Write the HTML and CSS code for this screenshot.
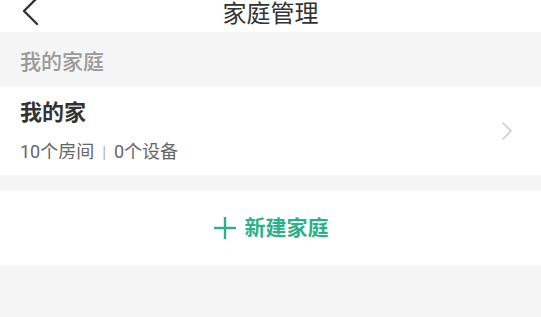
FILE: index.html
```html
<!DOCTYPE html>
<html lang="zh-CN">
<head>
<meta charset="utf-8">
<title>家庭管理</title>
<link rel="stylesheet" href="styles.css">
</head>
<body>
<header class="topbar">
  <div class="topbar-left">
    <svg class="back-icon" width="18" height="30" viewBox="0 0 18 30" aria-hidden="true">
      <polyline points="15,1 2,14 15,27" fill="none" stroke="#333" stroke-width="2.4" stroke-linecap="round" stroke-linejoin="round"/>
    </svg>
  </div>
  <h1 class="topbar-title">家庭管理</h1>
  <div class="topbar-right"></div>
</header>

<div class="section-label">我的家庭</div>

<div class="home-card">
  <div class="home-info">
    <div class="home-name">我的家</div>
    <div class="home-meta"><span>10个房间</span><span class="sep">|</span><span>0个设备</span></div>
  </div>
  <svg class="chevron" width="12" height="20" viewBox="0 0 12 20" aria-hidden="true">
    <polyline points="2,2 10,10 2,18" fill="none" stroke="#cfcfcf" stroke-width="1.6" stroke-linecap="round" stroke-linejoin="round"/>
  </svg>
</div>

<div class="add-row">
  <svg class="plus-icon" width="24" height="24" viewBox="0 0 24 24" aria-hidden="true">
    <line x1="1" y1="12" x2="23" y2="12" stroke="#2bb08a" stroke-width="2.4"/>
    <line x1="12" y1="1" x2="12" y2="23" stroke="#2bb08a" stroke-width="2.4"/>
  </svg>
  <span class="add-text">新建家庭</span>
</div>
</body>
</html>
```

FILE: styles.css
```css
html, body {
  margin: 0;
  padding: 0;
}

body {
  background: #f5f5f5;
  font-family: Roboto, "Noto Sans CJK SC", sans-serif;
  color: #333;
  width: 541px;
  height: 317px;
  overflow: hidden;
}

.topbar {
  height: 32px;
  background: #fff;
  display: grid;
  grid-template-columns: 1fr auto 1fr;
  align-items: start;
}

.topbar-left {
  padding-left: 22px;
  margin-top: -3px;
  height: 32px;
  overflow: hidden;
}

.back-icon {
  display: block;
}

.topbar-title {
  margin: 0;
  font-size: 24px;
  font-weight: 400;
  line-height: 28px;
  color: #333;
}

.section-label {
  height: 55px;
  display: flex;
  align-items: center;
  padding-left: 20px;
  font-size: 21px;
  font-weight: 500;
  color: #999;
}

.home-card {
  background: #fff;
  height: 88px;
  display: flex;
  align-items: center;
  justify-content: space-between;
  padding: 0 28px 0 20px;
}

.home-info {
  display: flex;
  flex-direction: column;
  gap: 13px;
}

.home-name {
  font-size: 22px;
  font-weight: 700;
  line-height: 28px;
  color: #333;
}

.home-meta {
  font-size: 18px;
  line-height: 24px;
  color: #666;
  display: flex;
  align-items: center;
}

.home-meta .sep {
  margin: 0 8px;
  color: #999;
  font-size: 17px;
  font-weight: 300;
}

.chevron {
  display: block;
}

.add-row {
  margin-top: 16px;
  height: 74px;
  background: #fff;
  display: flex;
  align-items: center;
  justify-content: center;
  gap: 8px;
}

.plus-icon {
  display: block;
}

.add-text {
  font-size: 21px;
  font-weight: 700;
  color: #2bb08a;
  line-height: 28px;
}
```
